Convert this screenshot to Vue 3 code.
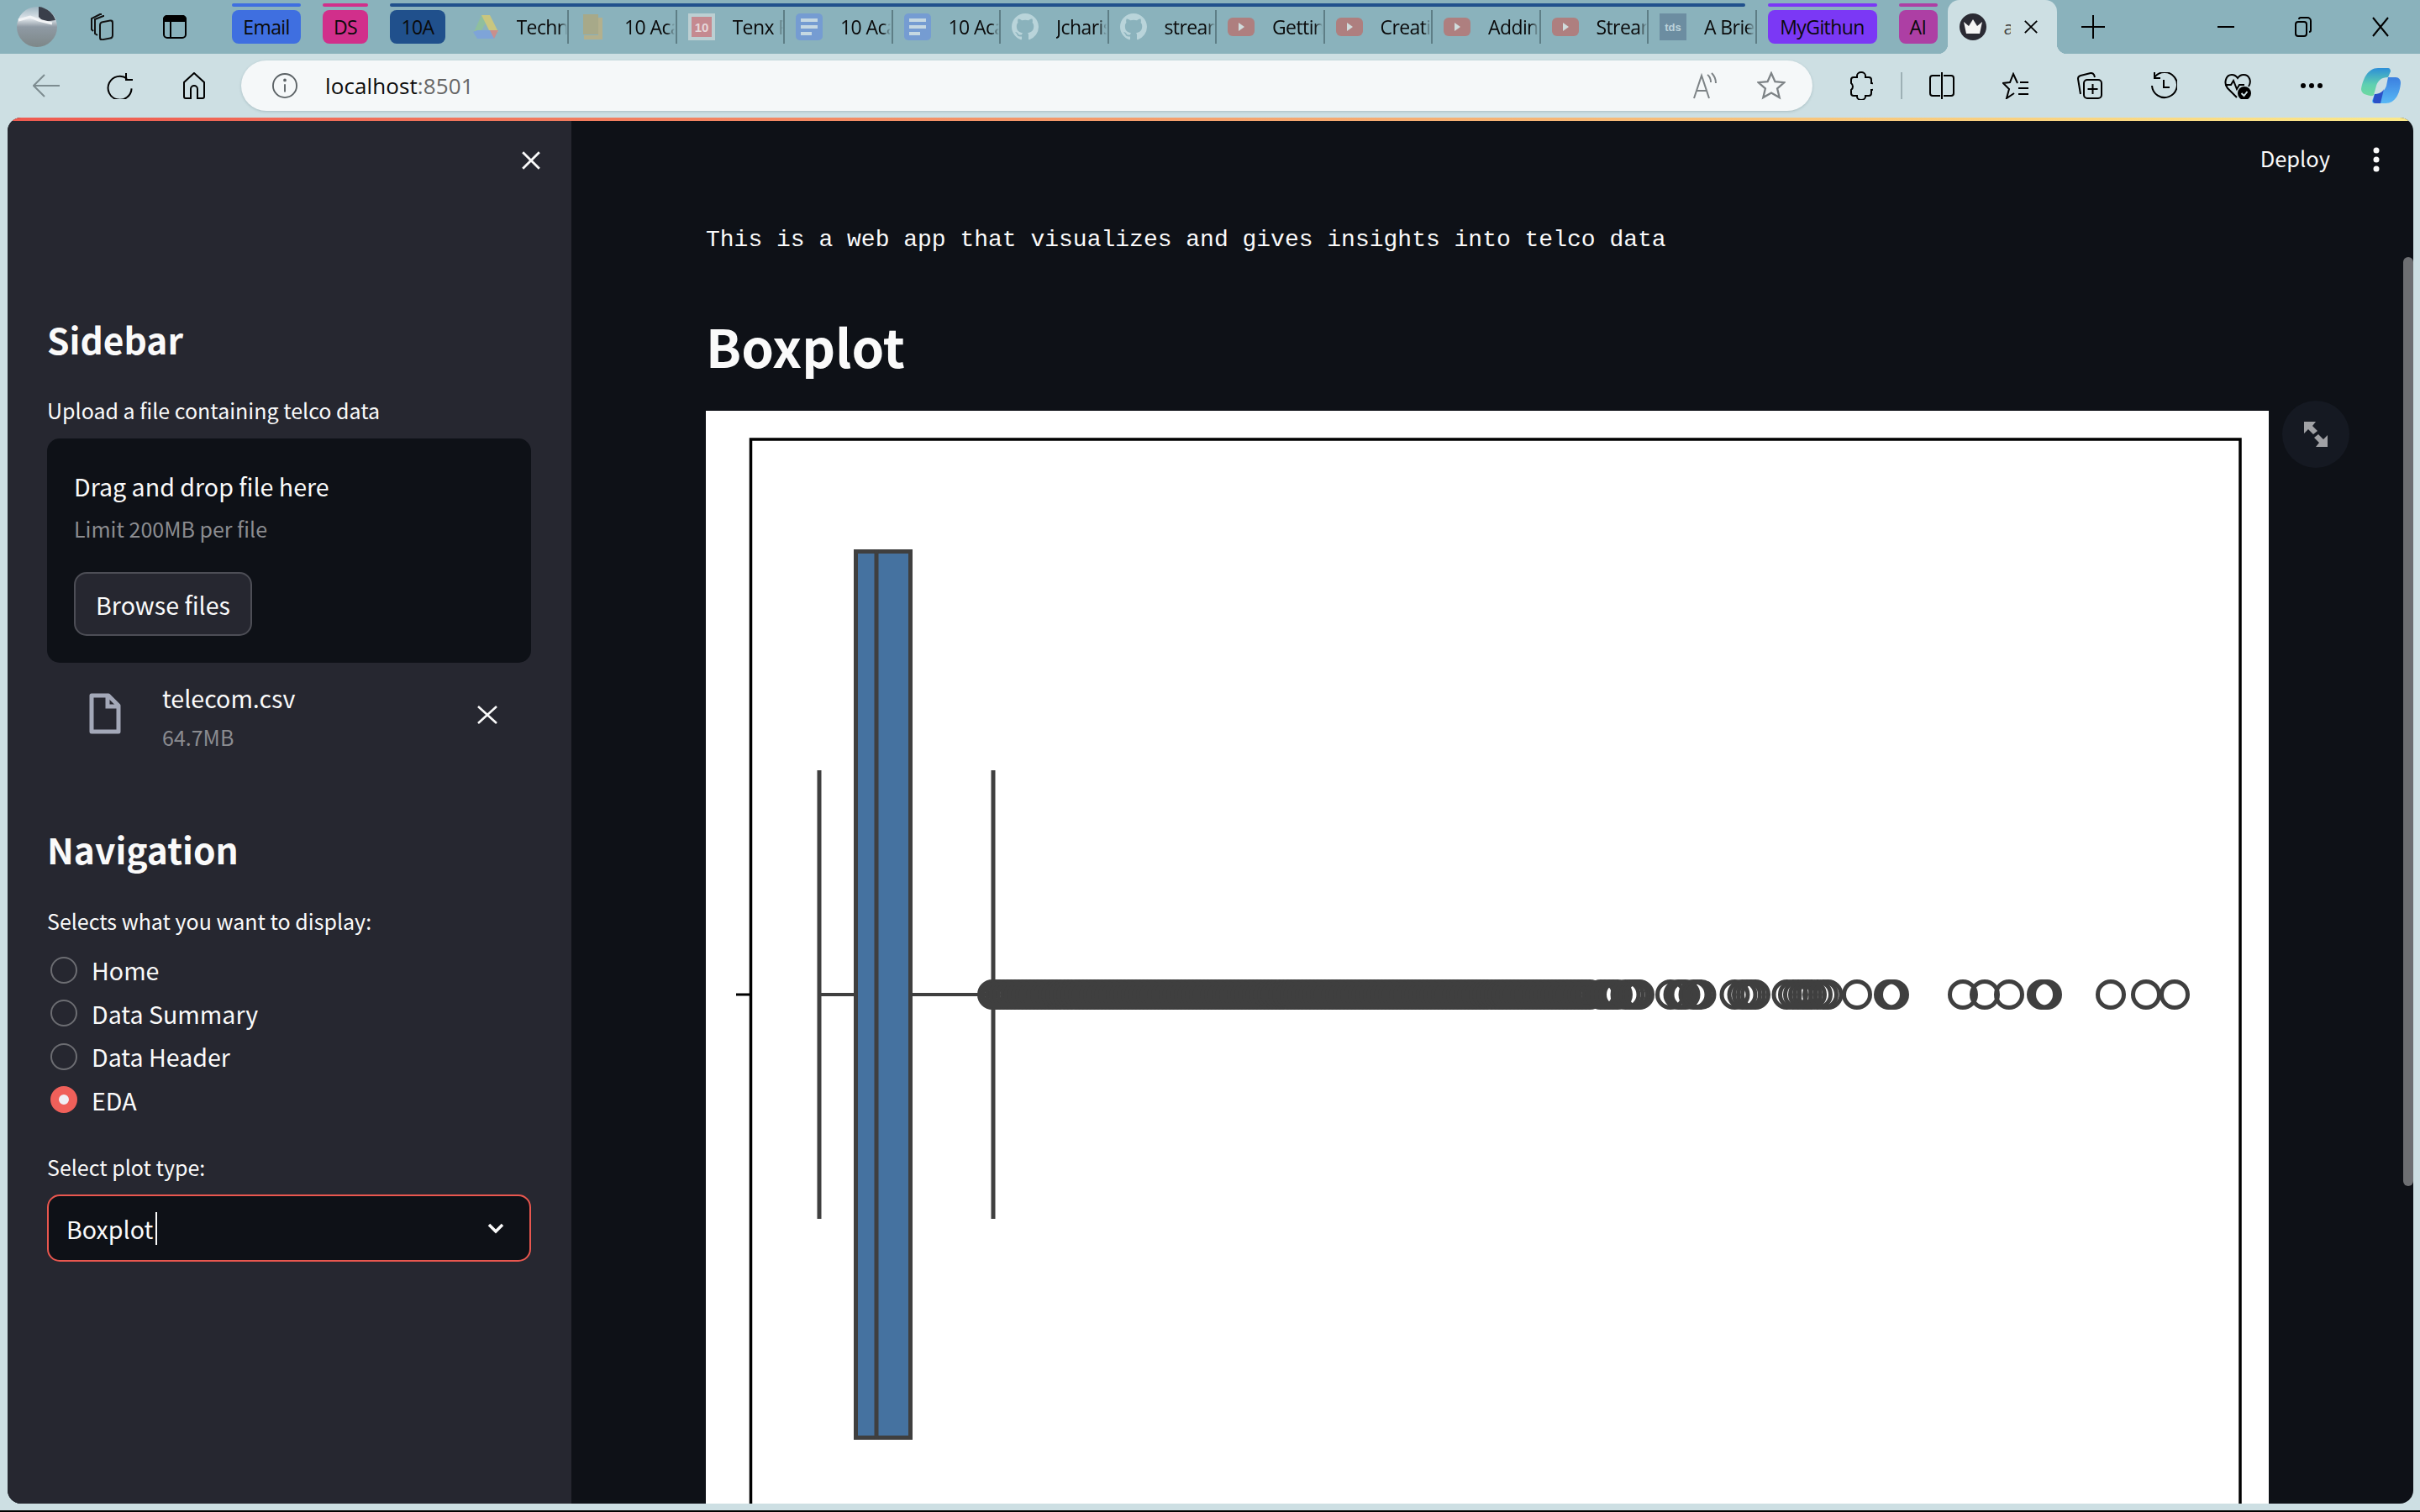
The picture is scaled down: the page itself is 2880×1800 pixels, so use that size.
<template>
  <div class="window">
    <!-- tab strip -->
    <div class="tabbar">
      <svg class="avatar" viewBox="0 0 48 48">
        <defs>
          <linearGradient id="sea" x1="0" y1="0" x2="0" y2="1">
            <stop offset="0" stop-color="#9fb6c2" />
            <stop offset="0.3" stop-color="#dfe5ea" />
            <stop offset="0.5" stop-color="#8f9aa4" />
            <stop offset="1" stop-color="#7d8788" />
          </linearGradient>
        </defs>
        <circle cx="24" cy="24" r="24" fill="url(#sea)" />
        <path d="M26 0a24 24 0 0 1 20 16l-14 2-6-6z" fill="#3a3f4a" />
        <path d="M2 16l14-4 10 4 16 4" stroke="#f2f4f6" stroke-width="3" fill="none" />
      </svg>
      <svg class="tb-icon workspace" viewBox="0 0 32 32" fill="none" stroke="#111" stroke-width="2">
        <rect x="13" y="9" width="15" height="21" rx="3" transform="skewY(-10) translate(0 4)" />
        <path d="M10 26 7 24V7l10-4h1" />
        <path d="M5 21 3 19V6l10-5h2" />
      </svg>
      <svg class="tb-icon vtabs" viewBox="0 0 28 28" fill="none" stroke="#000" stroke-width="2">
        <rect x="1" y="1" width="26" height="26" rx="4" />
        <path d="M1 5a4 4 0 0 1 4-4h18a4 4 0 0 1 4 4v2H1z" fill="#000" />
        <path d="M9 7v20" />
      </svg>

      <div class="group first">
        <div class="group-line" style="background: #3f6fe0"></div>
        <div class="chip" style="background: #3f6fe0; width: 82px">Email</div>
      </div>
      <div class="group">
        <div class="group-line" style="background: #d12f8b"></div>
        <div class="chip" style="background: #d12f8b; width: 54px">DS</div>
      </div>
      <div class="group">
        <div class="group-line wide" style="background: #20508c"></div>
        <div class="group-row">
          <div class="chip" style="background: #20508c; width: 66px">10A</div>
          <div class="tabs">
            <div v-for="tab in tabs" :key="tab.title + tab.icon" class="tab">
              <div class="favicon">
                <svg v-if="tab.icon === 'drive'" viewBox="0 0 32 32">
                  <path d="M11 2h10l-6 11-5 9-8-0z" fill="#8fbf9d" />
                  <path d="M11 2h10l10 20H21z" fill="#c9c67f" />
                  <path d="M6 20h25l-5 10H6l-5-8z" fill="#7ea4d8" />
                  <path d="M21 20h10l-5 10z" fill="#c98f8c" />
                </svg>
                <svg v-else-if="tab.icon === 'folder'" viewBox="0 0 32 32">
                  <path d="M4 1h18v24H4z" fill="#a7a989" />
                  <path d="M22 5h5v26H5v-5h17z" fill="#b3b08d" />
                </svg>
                <svg v-else-if="tab.icon === 'tenx'" viewBox="0 0 32 32">
                  <rect width="32" height="32" fill="#bccfd2" />
                  <rect x="4" y="4" width="24" height="24" fill="#c58a90" />
                  <text x="16" y="22" font-size="15" font-weight="700" text-anchor="middle" fill="#e5d8da" font-family="Liberation Sans, sans-serif">10</text>
                </svg>
                <svg v-else-if="tab.icon === 'doc'" viewBox="0 0 32 32">
                  <rect width="32" height="32" rx="5" fill="#759cd2" />
                  <path d="M6 8h20M6 16h20M6 24h13" stroke="#c5d8e2" stroke-width="4" />
                </svg>
                <svg v-else-if="tab.icon === 'github'" viewBox="0 0 16 16">
                  <path fill="#b9d4da" d="M8 0C3.58 0 0 3.58 0 8c0 3.54 2.29 6.53 5.47 7.59.4.07.55-.17.55-.38 0-.19-.01-.82-.01-1.49-2.01.37-2.53-.49-2.69-.94-.09-.23-.48-.94-.82-1.13-.28-.15-.68-.52-.01-.53.63-.01 1.08.58 1.23.82.72 1.21 1.87.87 2.33.66.07-.52.28-.87.51-1.07-1.78-.2-3.64-.89-3.64-3.95 0-.87.31-1.59.82-2.15-.08-.2-.36-1.02.08-2.12 0 0 .67-.21 2.2.82.64-.18 1.32-.27 2-.27.68 0 1.36.09 2 .27 1.53-1.04 2.2-.82 2.2-.82.44 1.1.16 1.92.08 2.12.51.56.82 1.27.82 2.15 0 3.07-1.87 3.75-3.65 3.95.29.25.54.73.54 1.48 0 1.07-.01 1.93-.01 2.2 0 .21.15.46.55.38A8.013 8.013 0 0016 8c0-4.42-3.58-8-8-8z" />
                </svg>
                <svg v-else-if="tab.icon === 'youtube'" viewBox="0 0 32 32">
                  <rect y="5" width="32" height="22" rx="6" fill="#ae7f7f" />
                  <path d="M13 11l7 5-7 5z" fill="#d0dcdc" />
                </svg>
                <svg v-else viewBox="0 0 32 32">
                  <rect width="32" height="32" fill="#6c8da1" />
                  <text x="16" y="21" font-size="13" font-weight="700" text-anchor="middle" fill="#bcd2da" font-family="Liberation Sans, sans-serif">tds</text>
                </svg>
              </div>
              <span class="tab-title">{{ tab.title }}</span>
            </div>
          </div>
        </div>
      </div>
      <div class="group tight">
        <div class="group-line" style="background: #7b38f5"></div>
        <div class="chip" style="background: #7b38f5; width: 130px">MyGithun</div>
      </div>
      <div class="group">
        <div class="group-line" style="background: #ad3fa4"></div>
        <div class="chip" style="background: #ad3fa4; width: 46px">AI</div>
      </div>

      <div class="active-tab">
        <svg class="crown" viewBox="0 0 32 32">
          <circle cx="16" cy="16" r="16" fill="#2a2a33" />
          <path d="M5 10l6 5 5-8 5 8 6-5-3 14H8z" fill="#f4f4f4" />
        </svg>
        <span class="active-title">app</span>
        <svg class="active-x" viewBox="0 0 20 20" fill="none" stroke="#000" stroke-width="2"><path d="M2 2l16 16M18 2 2 18" /></svg>
      </div>
      <svg class="new-tab" viewBox="0 0 28 28" fill="none" stroke="#000" stroke-width="2"><path d="M14 0v28M0 14h28" /></svg>

      <div class="win-controls">
        <div class="win-btn"><svg viewBox="0 0 20 20" width="20" height="20" fill="none" stroke="#000" stroke-width="2"><path d="M0 10h20" /></svg></div>
        <div class="win-btn"><svg viewBox="0 0 20 24" width="20" height="24" fill="none" stroke="#000" stroke-width="2"><rect x="1" y="6" width="13" height="17" rx="3" /><path d="M5 3a2 2 0 0 1 2-2h8a4 4 0 0 1 4 4v11a2 2 0 0 1-2 2" /></svg></div>
        <div class="win-btn"><svg viewBox="0 0 20 24" width="20" height="24" fill="none" stroke="#000" stroke-width="2"><path d="M1 1l18 22M19 1 1 23" /></svg></div>
      </div>
    </div>

    <!-- address bar row -->
    <div class="toolbar">
      <div class="nav-btn first-nav">
        <svg viewBox="0 0 32 28" width="32" height="28" fill="none" stroke="#7d8c90" stroke-width="2"><path d="M1 14h31M14 1 1 14l13 13" /></svg>
      </div>
      <div class="nav-btn">
        <svg viewBox="0 0 32 32" width="32" height="32" fill="none" stroke="#000" stroke-width="2"><path d="M22 6A14 14 0 1 0 30 16" transform="rotate(14 16 16)" /><path d="M23 1v8h8" /></svg>
      </div>
      <div class="nav-btn">
        <svg viewBox="0 0 28 32" width="28" height="32" fill="none" stroke="#000" stroke-width="2"><path d="M14 1 2 12v17a2 2 0 0 0 2 2h6V20a4 4 0 0 1 8 0v11h6a2 2 0 0 0 2-2V12z" /></svg>
      </div>

      <div class="address">
        <svg class="info" viewBox="0 0 32 32" fill="none" stroke="#5c6366" stroke-width="2"><circle cx="16" cy="16" r="15" /><path d="M16 14v10" /><circle cx="16" cy="9" r="1" fill="#5c6366" /></svg>
        <span class="host">localhost</span><span class="port">:8501</span>
        <svg class="read" viewBox="0 0 32 32" fill="none" stroke="#7d8386" stroke-width="2"><path d="M2 31 11 4l9 27M5 22h12" /><path d="M18 3c3 2 4 5 4 9M23 1c3 3 5 7 5 12" /></svg>
        <svg class="star" viewBox="0 0 32 32" fill="none" stroke="#7d8386" stroke-width="2.2"><path d="M16 2l4.2 9.4 10.3 1-7.8 6.8 2.4 10L16 24l-9.1 5.2 2.400-10-7.800-6.800 10.300-1z" /></svg>
      </div>

      <div class="nav-btn">
        <svg viewBox="0 0 28 34" width="28" height="34" fill="none" stroke="#000" stroke-width="2"><path d="M9 7V5a5 4 0 0 1 10 0v2h4a3 3 0 0 1 3 3v4a5 4 0 0 1 0 8v4a3 3 0 0 1-3 3h-4v1a5 4 0 0 1-10 0v-1H5a3 3 0 0 1-3-3v-4a5 5 0 0 0 0-8v-4a3 3 0 0 1 3-3z" /></svg>
      </div>
      <div class="tool-sep"></div>
      <div class="nav-btn">
        <svg viewBox="0 0 32 32" width="32" height="32" fill="none" stroke="#000" stroke-width="2"><path d="M14 4H5a3 3 0 0 0-3 3v18a3 3 0 0 0 3 3h9M18 4h9a3 3 0 0 1 3 3v18a3 3 0 0 1-3 3h-9M16 0v32" /></svg>
      </div>
      <div class="nav-btn">
        <svg viewBox="0 0 32 32" width="32" height="32" fill="none" stroke="#000" stroke-width="2"><path d="M18 13 13 2 9 12l-8 1 7 7-3 11 9-6" /><path d="M21 12h10M19 19h12M19 26h12" /></svg>
      </div>
      <div class="nav-btn">
        <svg viewBox="0 0 32 32" width="32" height="32" fill="none" stroke="#000" stroke-width="2"><path d="M5 26 2 8a4 4 0 0 1 3-4l12-3a4 4 0 0 1 4 2l1 3" /><rect x="9" y="9" width="21" height="22" rx="4" /><path d="M19.500 14v12M13.500 20h12" /></svg>
      </div>
      <div class="nav-btn">
        <svg viewBox="0 0 32 32" width="32" height="32" fill="none" stroke="#000" stroke-width="2"><path d="M5 6A15 15 0 1 1 2 16" /><path d="M5 0v7h7M16 9v9h7" /></svg>
      </div>
      <div class="nav-btn">
        <svg viewBox="0 0 32 32" width="32" height="32" fill="none" stroke="#000" stroke-width="2"><path d="M15 30 4 19C-1 13 2 3 9 3c3 0 5 1 7 4 2-3 4-4 7-4 7 0 10 8 6 14" /><path d="M1 15h7l3-5 4 10 3-5h6" /><circle cx="24" cy="25" r="7" fill="#000" /><path d="M20.500 25l3 3 4-5" stroke="#cddfe3" /></svg>
      </div>
      <div class="nav-btn">
        <svg viewBox="0 0 28 8" width="28" height="8" fill="#000"><circle cx="4" cy="4" r="3" /><circle cx="14" cy="4" r="3" /><circle cx="24" cy="4" r="3" /></svg>
      </div>
      <svg class="copilot" viewBox="0 0 47 42">
        <defs>
          <linearGradient id="copA" x1="0" y1="0" x2="0" y2="1">
            <stop offset="0" stop-color="#2d8fd8" />
            <stop offset="0.6" stop-color="#5fd0b0" />
            <stop offset="1" stop-color="#6fd9a0" />
          </linearGradient>
          <linearGradient id="copB" x1="0" y1="0" x2="0" y2="1">
            <stop offset="0" stop-color="#3b7fe0" />
            <stop offset="1" stop-color="#58b8f5" />
          </linearGradient>
        </defs>
        <path d="M20 0h12c2 0 3 2 3 4l-3 7c-8 0-12 4-14 10l-3 11c-2 2-5 1-8 0C2 31 0 28 0 25 2 13 8 0 20 0z" fill="url(#copA)" />
        <path d="M32 11h9c4 0 6 3 6 7-1 12-6 24-18 24H15c-1 0-2-1-2-3l3-8c8 0 12-4 14-10z" fill="url(#copB)" />
        <path d="M16 31c5 0 9-2 11-6l-4 17h-6c-2 0-3-2-3-3z" fill="#2a50c8" />
      </svg>
    </div>

    <!-- page -->
    <div class="page">
      <div class="decoration"></div>
      <div class="page-body">
        <aside class="sidebar">
          <svg class="close-side" viewBox="0 0 22 22" fill="none" stroke="#fafafa" stroke-width="2.6"><path d="M2 2l18 18M20 2 2 20" /></svg>
          <h2 class="side-title">Sidebar</h2>
          <label class="widget-label upload-label">Upload a file containing telco data</label>
          <div class="dropzone">
            <div class="drop-main">Drag and drop file here</div>
            <div class="drop-limit">Limit 200MB per file</div>
            <button class="browse">Browse files</button>
          </div>
          <div class="file-row">
            <svg class="file-icon" viewBox="0 0 38 49" fill="none" stroke="#a3a8b8" stroke-width="5"><path d="M3 3h20l12 12v31H3z" stroke-linejoin="round" /><path d="M22 3v13h13" /></svg>
            <div class="file-info">
              <div class="file-name">telecom.csv</div>
              <div class="file-size">64.7MB</div>
            </div>
            <svg class="file-x" viewBox="0 0 24 22" fill="none" stroke="#fafafa" stroke-width="2.6"><path d="M1 1l22 20M23 1 1 21" /></svg>
          </div>

          <h2 class="side-title nav-title">Navigation</h2>
          <label class="widget-label nav-label">Selects what you want to display:</label>
          <div class="radios">
            <div v-for="opt in options" :key="opt" class="radio">
              <span class="dot" :class="{ on: opt === selected }"></span>
              <span>{{ opt }}</span>
            </div>
          </div>
          <label class="widget-label plot-label">Select plot type:</label>
          <div class="select">
            <span class="select-value">Boxplot</span><span class="caret"></span>
            <svg class="chevron" viewBox="0 0 20 14" fill="none" stroke="#fafafa" stroke-width="3.5"><path d="M2 3l8 8 8-8" /></svg>
          </div>
        </aside>

        <main class="main">
          <div class="app-header">
            <span class="deploy">Deploy</span>
            <svg class="kebab" viewBox="0 0 8 30" fill="#fafafa"><circle cx="4" cy="4" r="3.5" /><circle cx="4" cy="15" r="3.500" /><circle cx="4" cy="26" r="3.5" /></svg>
          </div>
          <div class="intro">This is a web app that visualizes and gives insights into telco data</div>
          <h1 class="heading">Boxplot</h1>
          <div class="plot-wrap">
            <svg class="plot" viewBox="0 0 1860 1301" width="1860" height="1301">
              <rect width="1860" height="1301" fill="#fff" />
              <rect x="53.500" y="34" width="1772.500" height="1500" fill="none" stroke="#000" stroke-width="3.500" />
              <path d="M36 695h16" stroke="#000" stroke-width="3" />
              <g stroke="#3f3f3f" fill="none">
                <path d="M135 428v534M342 428v534" stroke-width="5" />
                <path d="M135 695h41M246 695h96" stroke-width="4" />
                <rect x="178.500" y="167.500" width="65" height="1055" fill="#4572a0" stroke-width="5" />
                <path d="M203 165v1060" stroke-width="5" />
                <circle v-for="(x, i) in outliers" :key="i" :cx="x" cy="695" r="15.500" stroke-width="5" />
              </g>
            </svg>
            <button class="expand">
              <svg viewBox="0 0 28 30" width="28" height="30" fill="#a0a1a5"><path d="M0 0h14l-4 5 6 6-5 4-6-6-5 5zM28 30H14l4-5-6-6 5-4 6 6 5-5z" /></svg>
            </button>
          </div>
          <div class="scrollbar"></div>
        </main>
      </div>
    </div>
    <div class="screen-edge"></div>
  </div>
</template>

<script setup>
const tabs = [
  { icon: 'drive', title: 'Technical' },
  { icon: 'folder', title: '10 Academy' },
  { icon: 'tenx', title: 'Tenx Platform' },
  { icon: 'doc', title: '10 Academy' },
  { icon: 'doc', title: '10 Acad' },
  { icon: 'github', title: 'Jcharis' },
  { icon: 'github', title: 'streamlit' },
  { icon: 'youtube', title: 'Getting' },
  { icon: 'youtube', title: 'Creating' },
  { icon: 'youtube', title: 'Adding' },
  { icon: 'youtube', title: 'Streamlit' },
  { icon: 'tds', title: 'A Brief' }
]

const options = ['Home', 'Data Summary', 'Data Header', 'EDA']
const selected = 'EDA'

// outlier rings, page x minus the plot's left edge (840)
function buildOutliers() {
  const xs = []
  for (let x = 1181; x < 1896; x += 4.5) xs.push(x)
  const loose = [
    1905, 1910, 1915, 1920, 1925, 1934.5, 1939.5, 1944.5, 1948, 1951,
    1988, 1997.5, 2001.5, 2005.5, 2015.5, 2020, 2024.5,
    2064.5, 2073.5, 2079, 2084, 2089,
    2126.5, 2134, 2140, 2146, 2151, 2156, 2163, 2170, 2175.5,
    2210, 2248, 2251, 2254, 2336, 2362, 2391, 2430, 2433, 2436, 2512, 2554, 2588
  ]
  return xs.concat(loose).map(x => x - 840)
}
const outliers = buildOutliers()
</script>

<style>
html, body {
  margin: 0;
  background: #000;
}
</style>

<style scoped>
.window {
  width: 2880px;
  height: 1800px;
  display: flex;
  flex-direction: column;
  overflow: hidden;
  background: #cddfe3;
  font-family: "Open Sans", sans-serif;
  color: #000;
}

.tabbar {
  height: 64px;
  flex: none;
  display: flex;
  align-items: flex-start;
  background: #8ab2bc;
  padding-left: 20px;
}

.avatar {
  width: 48px;
  height: 48px;
  margin-top: 8px;
}

.tb-icon {
  width: 32px;
  height: 32px;
  margin-top: 16px;
}

.workspace {
  margin-left: 38px;
}

.vtabs {
  width: 28px;
  height: 28px;
  margin-top: 18px;
  margin-left: 56px;
}

.group {
  margin-top: 4px;
  margin-left: 26px;
  display: flex;
  flex-direction: column;
}

.group.first {
  margin-left: 54px;
}

.group.tight {
  margin-left: 13px;
}

.group-line {
  height: 4px;
  margin-bottom: 4px;
  border-radius: 2px;
}

.group-line.wide {
  margin-right: 14px;
}

.group-row {
  display: flex;
}

.chip {
  height: 40px;
  border-radius: 8px;
  display: flex;
  align-items: center;
  justify-content: center;
  font-size: 23px;
  letter-spacing: -0.6px;
  color: #0a0a0a;
}

.tabs {
  display: flex;
  margin-left: 18.5px;
}

.tab {
  width: 128.5px;
  height: 40px;
  box-sizing: border-box;
  border-right: 2px solid #5e7e86;
  display: flex;
  align-items: center;
  padding-left: 13px;
  overflow: hidden;
}

.favicon {
  width: 32px;
  height: 32px;
  flex: none;
}

.favicon svg {
  display: block;
  width: 32px;
  height: 32px;
}

.tab-title {
  margin-left: 21px;
  font-size: 23px;
  letter-spacing: -0.6px;
  white-space: nowrap;
  color: #0a0a0a;
  flex: none;
  width: 60px;
  overflow: hidden;
  -webkit-mask-image: linear-gradient(90deg, #000 84%, transparent 100%);
  mask-image: linear-gradient(90deg, #000 84%, transparent 100%);
}

.active-tab {
  position: relative;
  margin-left: 12px;
  width: 130px;
  height: 64px;
  box-sizing: border-box;
  background: #cddfe3;
  border-radius: 14px 14px 0 0;
  display: flex;
  align-items: center;
  padding-left: 14px;
}

.active-tab::before,
.active-tab::after {
  content: "";
  position: absolute;
  bottom: 0;
  width: 12px;
  height: 12px;
}

.active-tab::before {
  left: -12px;
  background: radial-gradient(circle at 0 0, transparent 12px, #cddfe3 12.5px);
}

.active-tab::after {
  right: -12px;
  background: radial-gradient(circle at 100% 0, transparent 12px, #cddfe3 12.5px);
}

.crown {
  width: 32px;
  height: 32px;
  flex: none;
}

.active-title {
  margin-left: 21px;
  width: 8px;
  overflow: hidden;
  font-size: 22px;
  color: #444;
}

.active-x {
  width: 18px;
  height: 24px;
  margin-left: 15px;
  flex: none;
}

.new-tab {
  width: 28px;
  height: 28px;
  margin: 18px 0 0 29px;
}

.win-controls {
  margin-left: auto;
  display: flex;
  margin-right: 1px;
}

.win-btn {
  width: 92px;
  height: 64px;
  display: flex;
  align-items: center;
  justify-content: center;
}

.toolbar {
  height: 76px;
  flex: none;
  display: flex;
  align-items: center;
}

.nav-btn {
  width: 88px;
  height: 60px;
  flex: none;
  display: flex;
  align-items: center;
  justify-content: center;
}

.first-nav {
  margin-left: 11px;
}

.address {
  margin: 0 14px 0 12px;
  width: 1870px;
  height: 60px;
  box-sizing: border-box;
  background: #f5f8f9;
  border-radius: 30px;
  box-shadow: 0 1px 3px rgba(60, 90, 100, 0.25);
  display: flex;
  align-items: center;
  padding-left: 37px;
  font-size: 26px;
}

.info {
  width: 30px;
  height: 30px;
  margin-right: 33px;
}

.host {
  color: #0b0b0b;
  letter-spacing: 0.1px;
}

.port {
  color: #666;
  letter-spacing: 0.1px;
}

.read {
  width: 32px;
  height: 32px;
  margin-left: auto;
}

.star {
  width: 34px;
  height: 34px;
  margin-left: 45px;
  margin-right: 32px;
}

.tool-sep {
  width: 2px;
  height: 32px;
  margin: 0 3px 0 3px;
  background: #9db0b5;
  flex: none;
}

.copilot {
  width: 47px;
  height: 42px;
  margin-left: 15px;
}

.page {
  flex: 1;
  min-height: 0;
  margin: 0 8px 0 9px;
  border-radius: 16px;
  overflow: hidden;
  display: flex;
  flex-direction: column;
  background: #0e1117;
  font-family: "Noto Sans CJK SC", "Source Sans Pro", sans-serif;
  color: #fafafa;
}

.decoration {
  height: 4px;
  flex: none;
  background: linear-gradient(90deg, #ef5a50, #fbe98a);
}

.page-body {
  flex: 1;
  min-height: 0;
  display: flex;
}

.sidebar {
  width: 671px;
  flex: none;
  box-sizing: border-box;
  background: #262730;
  padding: 35px 48px 0 47px;
  display: flex;
  flex-direction: column;
}

.close-side {
  width: 24px;
  height: 24px;
  align-self: flex-end;
  margin-right: -12px;
  flex: none;
}

.side-title {
  margin: 174px 0 0;
  font-size: 42.5px;
  line-height: 54px;
  font-weight: 600;
}

.widget-label {
  display: block;
  font-size: 25px;
  line-height: 36px;
}

.upload-label {
  margin-top: 39px;
}

.dropzone {
  margin-top: 16px;
  height: 267px;
  box-sizing: border-box;
  background: #0e1117;
  border-radius: 15px;
  padding: 35px 32px 0;
  display: flex;
  flex-direction: column;
  align-items: flex-start;
}

.drop-main {
  font-size: 28.6px;
  line-height: 44px;
}

.drop-limit {
  font-size: 25px;
  line-height: 36px;
  margin-top: 10px;
  color: #8b8c90;
}

.browse {
  margin-top: 34px;
  width: 212px;
  height: 76px;
  border: 2px solid #4d4e56;
  border-radius: 15px;
  background: #262730;
  color: #fafafa;
  font: inherit;
  font-size: 28.6px;
}

.file-row {
  display: flex;
  align-items: flex-start;
  height: 100px;
  margin-top: 30px;
}

.file-icon {
  width: 38px;
  height: 49px;
  margin: 6px 0 0 50px;
  flex: none;
}

.file-info {
  margin-left: 49px;
}

.file-name {
  font-size: 28.6px;
  line-height: 40px;
  margin-top: -8px;
}

.file-size {
  font-size: 25px;
  line-height: 36px;
  margin-top: 8px;
  color: #8b8c90;
}

.file-x {
  width: 24px;
  height: 22px;
  margin: 21px 40px 0 auto;
  flex: none;
}

.nav-title {
  margin-top: 65px;
}

.nav-label {
  margin-top: 40px;
}

.radios {
  margin-top: 15px;
  display: flex;
  flex-direction: column;
}

.radio {
  height: 51.5px;
  display: flex;
  align-items: center;
  font-size: 28.6px;
  padding-left: 4px;
}

.dot {
  width: 32px;
  height: 32px;
  box-sizing: border-box;
  border: 2px solid #6c6d72;
  border-radius: 50%;
  margin-right: 17px;
  flex: none;
}

.dot.on {
  border: 10px solid #f0605a;
  background: #f0f0f5;
}

.plot-label {
  margin-top: 36px;
}

.select {
  margin-top: 15px;
  height: 80px;
  box-sizing: border-box;
  background: #0e1117;
  border: 2px solid #e9574f;
  border-radius: 15px;
  display: flex;
  align-items: center;
  padding-left: 21px;
  font-size: 28.6px;
}

.caret {
  width: 2px;
  height: 39px;
  margin-left: 3px;
  background: #fafafa;
}

.chevron {
  width: 20px;
  height: 14px;
  margin: 0 30px 0 auto;
}

.main {
  position: relative;
  flex: 1;
  min-width: 0;
  display: flex;
  flex-direction: column;
  padding-left: 160px;
  overflow: hidden;
}

.app-header {
  height: 64px;
  flex: none;
  display: flex;
  align-items: flex-end;
  justify-content: flex-end;
  padding-right: 40px;
  font-size: 25.5px;
}

.deploy {
  line-height: 40px;
  margin-right: 51px;
}

.kebab {
  width: 8px;
  height: 30px;
  margin-bottom: 3px;
}

.intro {
  margin-top: 60px;
  font-family: "Liberation Mono", monospace;
  font-size: 28px;
  line-height: 36px;
  white-space: pre;
}

.heading {
  margin: 67px 0 0;
  font-size: 62px;
  line-height: 80px;
  font-weight: 600;
}

.plot-wrap {
  position: relative;
  margin-top: 38px;
  flex: none;
}

.plot {
  display: block;
}

.expand {
  position: absolute;
  top: -12px;
  left: 1876px;
  width: 80px;
  height: 80px;
  border: none;
  border-radius: 50%;
  background: #151922;
  display: flex;
  align-items: center;
  justify-content: center;
  padding: 0;
}

.scrollbar {
  position: absolute;
  top: 162px;
  right: 0;
  width: 12px;
  height: 1106px;
  border-radius: 6px;
  background: #6d6f72;
}

.screen-edge {
  height: 10px;
  flex: none;
  background: linear-gradient(#cddfe3 8px, #000 8px);
}
</style>
